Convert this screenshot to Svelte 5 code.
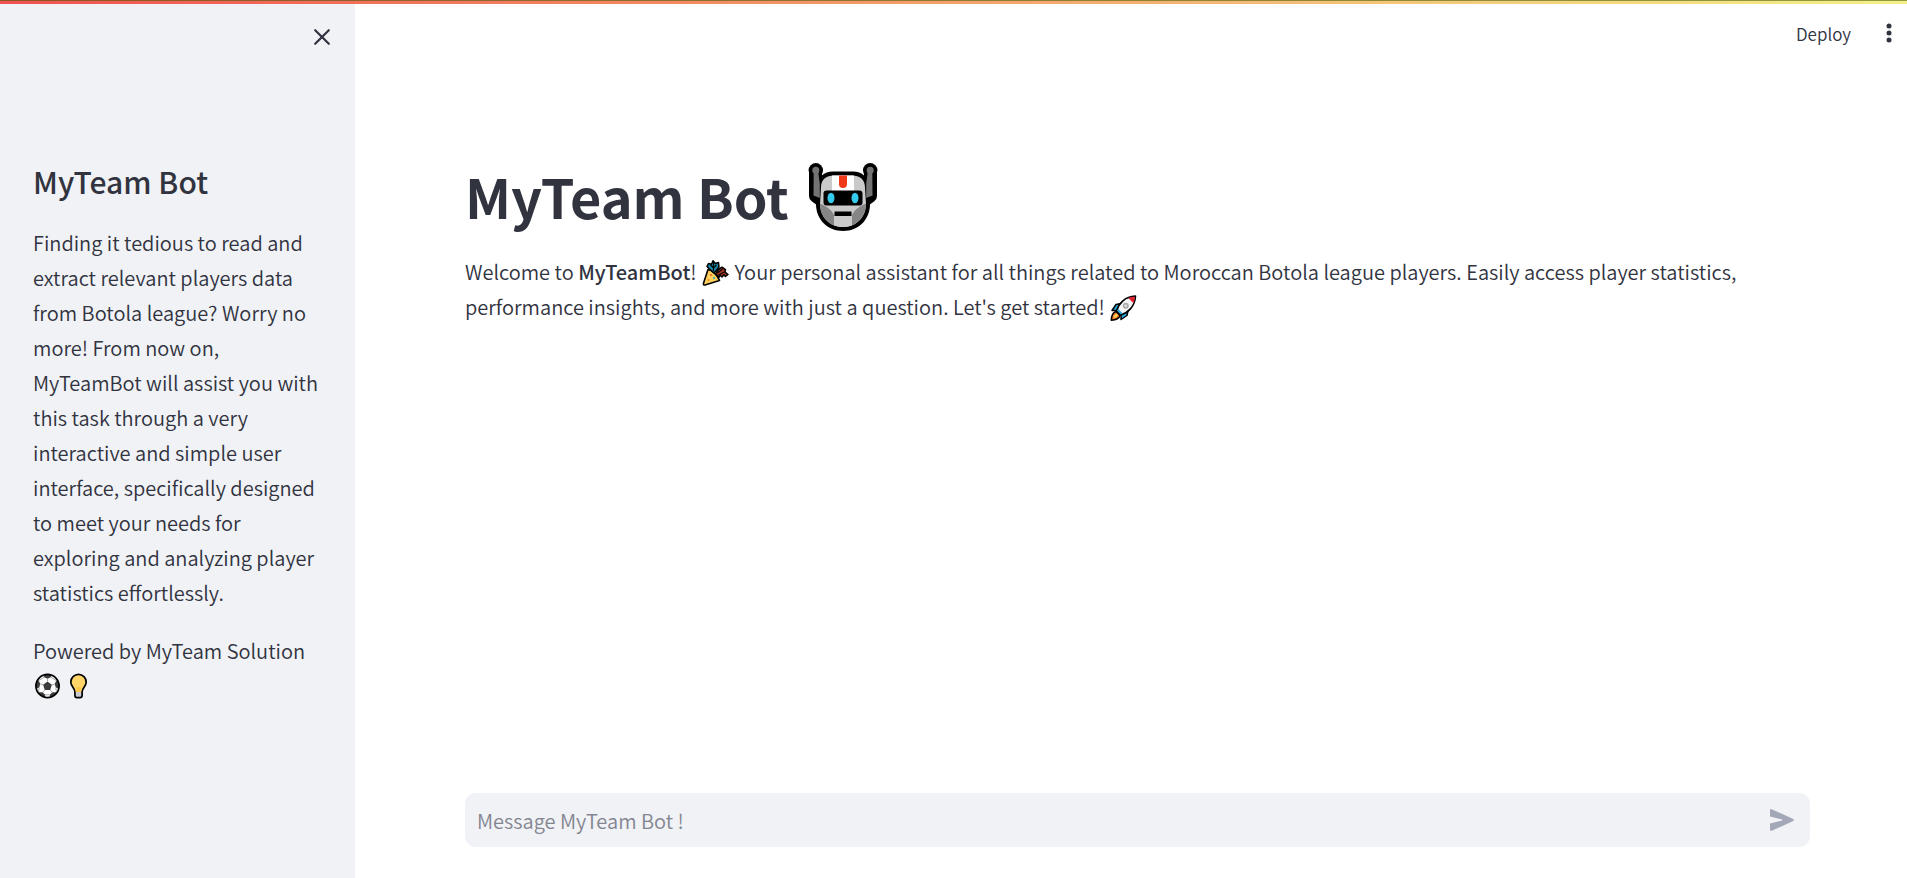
<script>
  let message = $state('');
</script>

<div class="app">
  <div class="decoration"></div>

  <aside class="sidebar">
    <div class="sidebar-header">
      <button class="icon-button" type="button" aria-label="Close sidebar">
        <svg width="18" height="18" viewBox="0 0 18 18" fill="none" stroke="#31333f" stroke-width="2.2" stroke-linecap="round">
          <path d="M2.2 2.2 15.8 15.8M15.8 2.2 2.2 15.8" />
        </svg>
      </button>
    </div>
    <div class="sidebar-content">
      <h2>MyTeam Bot</h2>
      <p>
        Finding it tedious to read and extract relevant players data from Botola league? Worry no more! From now on, MyTeamBot will assist you with this task through a very interactive and simple user interface, specifically designed to meet your needs for exploring and analyzing player statistics effortlessly.
      </p>
      <p>
        Powered by MyTeam Solution
        <span class="emoji-pair">
          <svg class="emoji" viewBox="0 0 28 28" role="img" aria-label="Football">
            <clipPath id="ball"><circle cx="14" cy="14" r="11.6" /></clipPath>
            <circle cx="14" cy="14" r="11.6" fill="#fff" />
            <g clip-path="url(#ball)">
              <path fill="#3d3d3d" d="M14 9.6l4.4 3.2-1.7 5.2h-5.4l-1.7-5.2zM8.6 1.2h10.8L17.3 5.2 14 6.8 10.7 5.2zM1 8.8l4.2-.2 1.6 3.4-1.1 3.6-4.2 1.8zM27 8.8l-4.2-.2-1.6 3.4 1.1 3.6 4.2 1.8zM5 20.3l4.2-.1 2.5 2.6-.2 4.2-5 .2zM23 20.3l-4.2-.1-2.5 2.6.2 4.2 5 .2z" />
              <path stroke="#a9a9a9" stroke-width="1" fill="none" d="M14 6.8v2.8M6.8 12l2.8.8M21.2 12l-2.8.8M11.3 18l-2.1 2.2M16.7 18l2.1 2.2M5.2 8.6l5.5-3.4M22.8 8.6l-5.5-3.4M5.7 15.6L5 20.3M22.3 15.6l.7 4.7M11.7 22.8h4.6" />
            </g>
            <circle cx="14" cy="14" r="11.6" fill="none" stroke="#000" stroke-width="1.7" />
          </svg>
          <svg class="emoji" viewBox="0 0 28 28" role="img" aria-label="Light bulb">
            <path fill="#ffd469" d="M14 2.4a7.7 7.7 0 0 0-7.7 7.7c0 4.7 4.1 5.6 4.1 9.9h7.2c0-4.3 4.1-5.2 4.1-9.9A7.7 7.7 0 0 0 14 2.4z" />
            <path fill="#f9c548" d="M12.1 15h3.8v5h-3.8z" />
            <path fill="#c9cdd3" d="M10.4 20h7.2v3.4a1.8 1.8 0 0 1-1.8 1.8h-3.6a1.8 1.8 0 0 1-1.8-1.8z" />
            <path fill="none" stroke="#000" stroke-width="1.7" stroke-linejoin="round" d="M14 2.4a7.7 7.7 0 0 0-7.7 7.7c0 4.7 4.1 5.6 4.1 9.9v3.4a2.2 2.2 0 0 0 2.2 2.2h2.8a2.2 2.2 0 0 0 2.2-2.2V20c0-4.3 4.1-5.2 4.1-9.9A7.7 7.7 0 0 0 14 2.4z" />
          </svg>
        </span>
      </p>
    </div>
  </aside>

  <div class="page">
    <header class="toolbar">
      <button class="deploy" type="button">Deploy</button>
      <button class="icon-button" type="button" aria-label="Main menu">
        <svg width="6" height="20" viewBox="0 0 6 20" fill="#31333f">
          <circle cx="3" cy="3" r="2.5" />
          <circle cx="3" cy="10" r="2.5" />
          <circle cx="3" cy="17" r="2.5" />
        </svg>
      </button>
    </header>

    <main>
      <h1>
        <span>MyTeam Bot</span>
        <svg class="robot" viewBox="0 0 70 70" role="img" aria-label="Robot">
          <path fill="none" stroke="#000" stroke-width="13" stroke-linecap="round" stroke-linejoin="round" d="M7.5 12V34L13 38M62.5 12V34L57 38" />
          <circle cx="7.8" cy="8.3" r="7.2" />
          <circle cx="62.2" cy="8.3" r="7.2" />
          <path d="M25 9.5H45C54 9.5 60.5 15 61 24L62 42C62 58 50 69 35 69S8 58 8 42L9 24C9.500 15 16 9.500 25 9.500z" />
          <path fill="#737373" d="M5.700 8H10L11.800 22V36L5.500 33.500zM64.300 8H60L58.200 22V36L64.500 33.500z" />
          <circle cx="7.8" cy="8.3" r="3.5" fill="#737373" />
          <circle cx="62.2" cy="8.3" r="3.500" fill="#737373" />
          <path fill="#cacaca" d="M26 13.500H44C52 13.500 57 17.500 57 25.500L58 42C58 55.500 48 65 35 65S12 55.500 12 42L13 25.500C13 17.500 18 13.500 26 13.500z" />
          <path fill="#858585" d="M12 41.500C18 44 23 47 26 53V63.500C18 60 12 52 12 41.500zM58 41.500C52 44 47 47 44 53V63.500C52 60 58 52 58 41.500z" />
          <path fill="#cacaca" d="M26 50H44V63.500C38 65.500 32 65.500 26 63.500z" />
          <path fill="#fff" d="M24 13.500H46V30H24z" />
          <path fill="#f03a17" d="M31 13.500H39V22A4 4 0 0 1 31 22z" />
          <rect x="15.500" y="28.500" width="39" height="15" rx="3" />
          <ellipse cx="23" cy="36" rx="3.500" ry="5.300" fill="#35cbef" />
          <ellipse cx="47" cy="36" rx="3.500" ry="5.300" fill="#35cbef" />
          <path d="M26.500 49.500H43.500V54H26.500z" />
        </svg>
      </h1>
      <p>
        Welcome to <strong>MyTeamBot</strong>!
        <svg class="emoji" viewBox="0 0 28 28" role="img" aria-label="Party popper">
          <path fill="#ffcf5c" stroke="#000" stroke-width="1.600" stroke-linejoin="round" d="M6.500 10.500C10.500 11 16.500 17 18 21.500L3.500 26Q1.500 26.300 2 24.300z" />
          <path fill="#1687a7" stroke="#000" stroke-width="1.500" stroke-linejoin="round" d="M8.500 10.500L5.500 7.500 7 4.500 10 5.300 11.500 1.800 14 4.500 17 3.500 17.500 8 14.500 12 12.200 13.800z" />
          <path fill="#a63420" stroke="#000" stroke-width="1.500" stroke-linejoin="round" d="M14.200 14.500L17 10.500 20.500 8.200 24 10.700 23.500 13 26.500 15.500 24 17.500 22.500 15.800 20.500 18 18.700 16.200 17.300 18.500z" />
          <path stroke="#000" stroke-width="1.200" fill="none" d="M9 6l3 3 3-3M12 3v9M16 14l5-4M17 16l6-3" />
          <circle cx="9.500" cy="16" r="1" fill="#ef5b32" />
          <circle cx="12.500" cy="19" r="1" fill="#18a7c9" />
          <circle cx="7" cy="21" r="1" fill="#ef8a22" />
        </svg>
        Your personal assistant for all things related to Moroccan Botola league players. Easily access player statistics, performance insights, and more with just a question. Let's get started!
        <svg class="emoji" viewBox="0 0 28 28" role="img" aria-label="Rocket">
          <path fill="#26a9e0" stroke="#000" stroke-width="1.500" stroke-linejoin="round" d="M11.500 9.500L6.500 10.500 2.500 16.500 8 16.300zM18.500 16.500L17.500 21.500 11.500 25.500 11.700 20z" />
          <path fill="#f47b20" stroke="#000" stroke-width="1.500" stroke-linejoin="round" d="M6.500 17.500C3 18.500 2 22 1.800 26.200 6 26 9.500 25 10.500 21.500z" />
          <path fill="#ffd05b" d="M7 19.500C5 20.500 4.200 22 4 24 6 23.800 7.500 23 8.500 21z" />
          <path fill="#f5f5f5" stroke="#000" stroke-width="1.600" stroke-linejoin="round" d="M7 17C9 10 15 2.500 26 2 25.500 13 18 19 11 21z" />
          <path fill="#e3202b" d="M18.800 4Q22 2.900 25.200 2.800 25.100 6 24 9.200z" />
          <path fill="#26a9e0" d="M8.600 14.800L13.200 19.400 11.200 20.200 7.800 16.800z" />
          <circle cx="16.300" cy="11.700" r="3" fill="#a8a8a8" />
          <circle cx="16.300" cy="11.700" r="1.500" fill="#d8d8d8" />
        </svg>
      </p>
    </main>

    <form class="chat" onsubmit={(event) => event.preventDefault()}>
      <input type="text" aria-label="Message MyTeam Bot !" placeholder="Message MyTeam Bot !" bind:value={message} />
      <button class="icon-button" type="submit" aria-label="Send message">
        <svg width="24" height="22" viewBox="0 0 24 22" fill="#a3a8b8">
          <path d="M1.700.2L23.200 9.900Q24.500 11 23.200 12.100L1.700 21.800Q0 22.200 0 20.500V14.500L11.500 11.700Q13.200 11 11.500 10.300L0 7.500V1.500Q0-.2 1.700.2z" />
        </svg>
      </button>
    </form>
  </div>
</div>

<style>
  :global(body) {
    margin: 0;
    background: #fff;
  }

  .app {
    display: flex;
    min-height: 100vh;
    color: #31333f;
    font-family: "Noto Sans CJK SC", "Noto Sans", sans-serif;
    font-size: 20px;
    font-weight: 350;
    line-height: 35px;
  }

  .decoration {
    position: fixed;
    inset: 0 0 auto;
    z-index: 1;
    height: 3px;
    border-top: 1px solid rgb(60 90 0 / 55%);
    background: linear-gradient(90deg, #f0524f, #f5f08a) border-box;
  }

  .sidebar {
    flex: none;
    box-sizing: border-box;
    width: 355px;
    background: #f0f2f6;
  }

  .sidebar-header {
    display: flex;
    justify-content: flex-end;
    padding: 20px 16px 0;
  }

  .sidebar-content {
    padding: 107px 33px 0;
  }

  h1,
  h2,
  p {
    margin: 0;
  }

  h2 {
    margin-bottom: 24px;
    font-size: 30px;
    font-weight: 500;
    line-height: 40px;
  }

  p + p {
    margin-top: 23px;
  }

  .emoji-pair {
    display: inline-flex;
    gap: 2px;
    height: 35px;
    align-items: center;
    vertical-align: top;
  }

  .emoji {
    width: 29px;
    height: 28px;
    vertical-align: -7px;
  }

  .icon-button {
    display: flex;
    align-items: center;
    justify-content: center;
    width: 34px;
    height: 34px;
    padding: 0;
    border: 0;
    background: none;
    cursor: pointer;
  }

  .page {
    display: flex;
    flex: 1;
    flex-direction: column;
    min-width: 0;
  }

  .toolbar {
    display: flex;
    align-items: center;
    justify-content: flex-end;
    gap: 21px;
    height: 66px;
    padding-right: 1px;
  }

  .deploy {
    padding: 0;
    border: 0;
    background: none;
    color: inherit;
    font: inherit;
    font-size: 17px;
    cursor: pointer;
  }

  main {
    flex: 1;
    padding: 94px 97px 55px 110px;
  }

  h1 {
    display: flex;
    align-items: flex-end;
    gap: 19px;
    margin-bottom: 22px;
    font-size: 54px;
    font-weight: 700;
    line-height: 72px;
  }

  .robot {
    width: 70px;
    height: 70px;
  }

  strong {
    font-weight: 500;
  }

  .chat {
    display: flex;
    align-items: center;
    height: 54px;
    margin: 0 97px 31px 110px;
    padding: 0 11px 0 12px;
    box-sizing: border-box;
    border-radius: 11px;
    background: #f0f2f6;
  }

  input {
    flex: 1;
    min-width: 0;
    padding: 0;
    border: 0;
    outline: 0;
    background: none;
    color: inherit;
    font: inherit;
  }

  input::placeholder {
    color: #838590;
    opacity: 1;
  }
</style>
